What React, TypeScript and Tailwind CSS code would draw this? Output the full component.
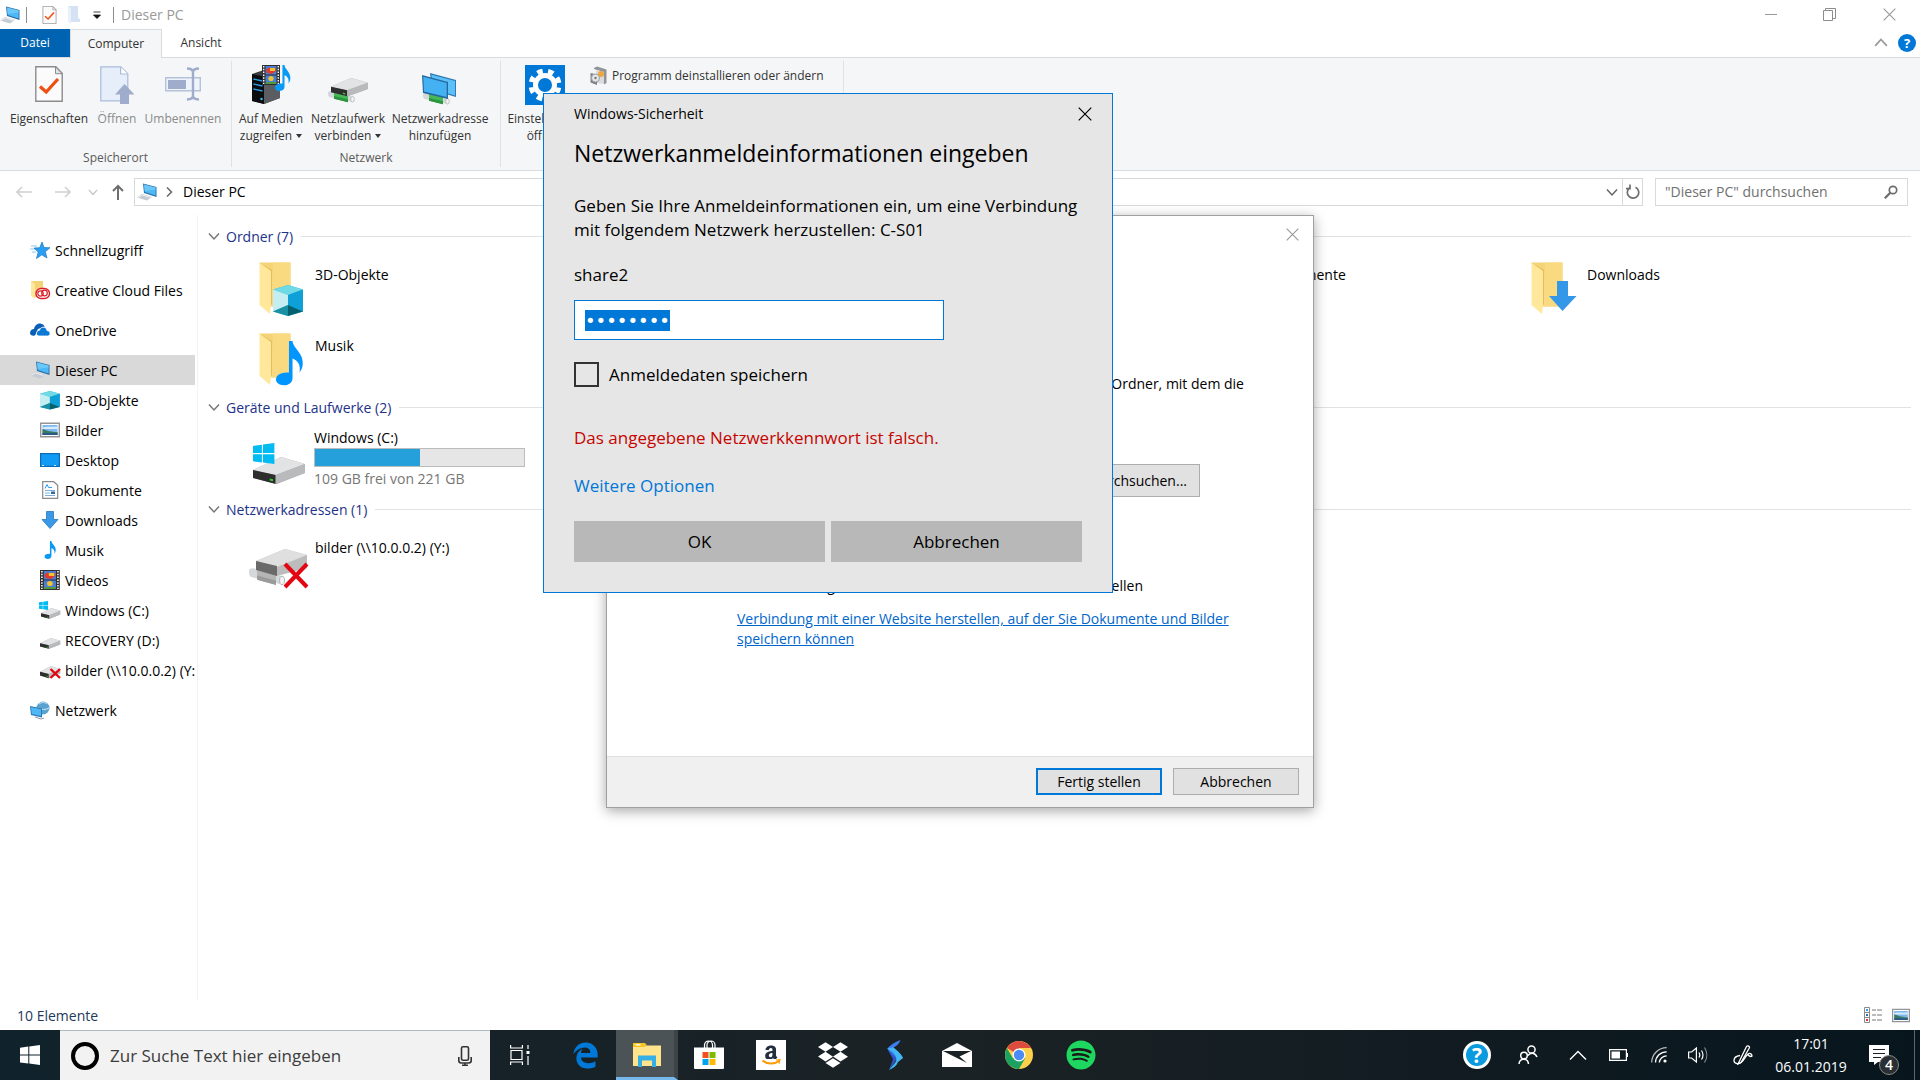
import { useEffect, useRef, type ReactNode } from "react"
import { FaAmazon, FaDropbox, FaEdgeLegacy, FaSpotify } from "react-icons/fa"

/* ---------- Icons ---------- */

interface IconProps {
  className?: string
}

function PcIcon({ className = "" }: IconProps) {
  return (
    <svg viewBox="0 0 20 18" className={`h-[18px] w-5 shrink-0 ${className}`} aria-hidden="true">
      <path d="M0 14.5 5 11l10 3-5 3.5z" fill="#c4cbd4" />
      <path d="M1 14.6 5.4 12l8 2.4" stroke="#eef1f4" fill="none" />
      <path d="M6 .5 19.5 4v10L7 10z" fill="#2a6ea6" />
      <path d="M7 1.6 18.6 4.6v8L7.8 9z" fill="#4db8f5" />
      <path d="M7 1.6 18.6 4.6v2L7.5 8z" fill="#7fd0fb" opacity=".6" />
    </svg>
  )
}

function SheetCheckIcon({ className = "" }: IconProps) {
  return (
    <svg viewBox="0 0 28 36" className={className} aria-hidden="true">
      <path d="M.8.8h20l6.4 6.6v27.8H.8z" fill="#fbfbfb" stroke="#8c8c8c" strokeWidth="1.4" />
      <path d="M20.5 1v6.7h6.7z" fill="#e4e4e4" stroke="#8c8c8c" strokeWidth="1" />
      <path d="M5 20.5 11.2 26 23 13" fill="none" stroke="#f04e12" strokeWidth="3.2" />
    </svg>
  )
}

function OpenIcon() {
  return (
    <svg viewBox="0 0 35 38" className="h-[38px] w-[35px]" aria-hidden="true">
      <path d="M.8.8h20l7 7v27H.8z" fill="#e6eefa" stroke="#a9bbdb" strokeWidth="1.2" />
      <path d="M20.6 1v7h7" fill="#fff" stroke="#a9bbdb" strokeWidth="1.2" />
      <path d="M24.5 18 34.5 28.5H29V38h-9v-9.5h-5z" fill="#9faccb" />
    </svg>
  )
}

function RenameIcon() {
  return (
    <svg viewBox="0 0 36 34" className="h-[34px] w-9" aria-hidden="true">
      <path d="M.7 10.7h34.6v13H.7z" fill="#eff4fb" stroke="#b4c2da" strokeWidth="1.4" />
      <path d="M3 13h18v9H3z" fill="#9faccb" />
      <path d="M22 1.5c4 0 6 1 6 4v23c0 3-2 4-6 4M34 1.5c-4 0-6 1-6 4v23c0 3 2 4 6 4" fill="none" stroke="#9faccb" strokeWidth="2.4" />
    </svg>
  )
}

function FilmStrip() {
  return (
    <>
      <path d="M0 0h18v20H0z" fill="#2f2f2f" />
      <path d="M3.5 1h11v8.5h-11z" fill="#4a7fd6" />
      <path d="M3.5 10.5h11V19h-11z" fill="#4a7fd6" />
      <path d="M4 5l3-3 2 3 4-3 1 4-4 3-5-1z" fill="#e33a2c" />
      <path d="M8 3h5v3H8z" fill="#f1c232" />
      <circle cx="9" cy="13.5" r="2.6" fill="#f1c232" />
      <path d="M4 17h10v2H4z" fill="#4f9a3b" />
      <path d="M1.7 1v18M16.3 1v18" stroke="#fff" strokeWidth="1.4" strokeDasharray="1.5 1.3" />
    </>
  )
}

function NotePath({ fill = "#0a99f5" }: { fill?: string }) {
  return (
    <path
      d="M8 0h2.200c.4 5 7 7.500 6.300 15-.2 2-1 3.500-2 5 .8-4.500-.5-7.500-4.300-9v12.500c0 3-2.600 4.500-5.400 4.500C2 28 0 26.500 0 24.400 0 21.600 3 19.600 8 20z"
      fill={fill}
    />
  )
}

function MediaServerIcon() {
  return (
    <svg viewBox="0 0 40 40" className="size-10" aria-hidden="true">
      <path d="M1 9l12-4 16 3v25l-16 6L1 36z" fill="#3a3d40" />
      <path d="M1 9l12 2.5V39L1 36z" fill="#0c0d0f" />
      <path d="M13 11.5 29 8v25l-16 6z" fill="#5a5e62" />
      <path d="M2.500 14l9 2M2.500 19l9 2M2.500 24l9 2" stroke="#2aa3ef" strokeWidth="1.3" />
      <circle cx="10.5" cy="34" r="1.2" fill="#37c4ff" />
      <g transform="translate(11 0)">
        <FilmStrip />
      </g>
      <g transform="translate(24 0) scale(.93)">
        <NotePath />
      </g>
    </svg>
  )
}

function DriveShape() {
  return (
    <>
      <path d="M0 13 26 0l22 7v9L22 27 0 21z" fill="#a8a8a8" />
      <path d="M0 13 26 0l22 7L21 18z" fill="#e2e3e5" />
      <path d="M0 13l21 5v9L0 21z" fill="#2e2e2e" />
      <path d="M21 18 48 7v9L21 27z" fill="#b9babb" />
      <path d="M15.5 21.5l3 .8v2l-3-.8z" fill="#33d12b" />
    </>
  )
}

function PipeShape({ body = "#46b957", dark = "#2d9440" }: { body?: string; dark?: string }) {
  return (
    <>
      <path d="M0 1.5C0 .5 2 0 3 .2l22 5.300c1.500.4 2 5-.5 5.500L1.500 6C0 5.500 0 3 0 1.500z" fill="#d4d8da" />
      <path d="M6 0l14 3.200v8L6 7.800z" fill={body} />
      <path d="M6 5l14 3.300v3L6 7.800z" fill={dark} />
      <ellipse cx="24.5" cy="8.3" rx="1.8" ry="2.8" fill="#f4f4f4" stroke="#a3a8aa" strokeWidth=".6" />
    </>
  )
}

function NetDriveIcon() {
  return (
    <svg viewBox="0 0 40 28" className="h-7 w-10" aria-hidden="true">
      <g transform="translate(0 14)">
        <PipeShape />
      </g>
      <g transform="translate(3 1) scale(.77 .68)">
        <DriveShape />
      </g>
    </svg>
  )
}

function NetPlaceIcon() {
  return (
    <svg viewBox="0 0 36 32" className="h-8 w-9" aria-hidden="true">
      <path d="M8 0l26 7v17L10 17z" fill="#2f79b5" />
      <path d="M9.500 1.700 33 8v14.500L11 16z" fill="#5cc0f8" />
      <g transform="translate(1 20)">
        <PipeShape />
      </g>
      <path d="M0 2l26 7v17L1 20z" fill="#24689f" />
      <path d="M1.300 3.700 24.700 10v14L2 18.500z" fill="#44b1f3" />
    </svg>
  )
}

function GearIcon() {
  return (
    <svg viewBox="0 0 40 40" className="size-10" aria-hidden="true">
      <path d="M0 0h40v40H0z" fill="#0078d7" />
      <circle cx="20" cy="20" r="9.5" fill="none" stroke="#fff" strokeWidth="5" />
      <circle cx="20" cy="20" r="14" fill="none" stroke="#fff" strokeWidth="5" strokeDasharray="5.5 5.496" strokeDashoffset="-2.7" />
    </svg>
  )
}

function UninstallIcon() {
  return (
    <svg viewBox="0 0 17 20" className="h-5 w-[17px]" aria-hidden="true">
      <path d="M4 2l3-1.500 9.500 3V17L14 18.500V6L4 3z" fill="#8f9498" />
      <path d="M6 4l8 2.500V18l-8-1z" fill="#d9dbdc" />
      <circle cx="11" cy="8" r="3" fill="#f0a63a" />
      <path d="M.5 7 7 8.500V19L.5 16.500z" fill="#7d8184" />
      <circle cx="5.5" cy="12" r="4" fill="#e5e8ea" stroke="#9b9fa2" />
      <circle cx="5.5" cy="12" r="1.2" fill="#777" />
    </svg>
  )
}

function CubeShape() {
  return (
    <>
      <path d="M0 4.500 15 0l15 4.500v22L15 31 0 26.500z" fill="#22b8d0" />
      <path d="M0 4.500 15 0l15 4.500L15 10z" fill="#6fd9e6" />
      <path d="M0 4.500 15 10v10L0 26.500z" fill="#c5eef3" />
      <path d="M15 10 30 4.500v22L15 20z" fill="#0fa0d8" />
      <path d="M0 26.500 15 20v11z" fill="#1b8fa3" />
      <path d="M15 20l15 6.500L15 31z" fill="#05616f" />
    </>
  )
}

function PictureShape() {
  return (
    <>
      <path d="M.7.700h18.600v13.600H.7z" fill="#fff" stroke="#949494" strokeWidth="1.4" />
      <path d="M2.500 2.500h15v10h-15z" fill="#7db8ee" />
      <path d="M2.500 5c5-1.500 9 0 15-1v2.500h-15z" fill="#d7ebfa" />
      <path d="M2.500 6.500c3 .5 6 3 15 3v3h-15z" fill="#3e7a63" />
      <path d="M2.500 10.500c5-1 10 .5 15 0v2h-15z" fill="#2a5a86" />
    </>
  )
}

type FolderKind = "cube" | "music" | "download" | "picture" | "desktop" | "document" | "video"

function FolderIcon({ kind }: { kind: FolderKind }) {
  return (
    <svg viewBox="0 0 48 54" className="h-[54px] w-12" aria-hidden="true">
      <path d="M.5.500h31V44.500h-20z" fill="#f5d478" />
      <path d="M14 .500h17.500V44.500H12z" fill="#f9da80" />
      <path d="M.5.500 12 9v34l-1 9L.5 43z" fill="#ffe79c" />
      <path d="M.5.500 12 9v34l1-1V8z" fill="#e5bd5c" />
      {kind === "cube" && (
        <g transform="translate(14 23)">
          <CubeShape />
        </g>
      )}
      {kind === "music" && (
        <g transform="translate(17 8) scale(1.62 1.58)">
          <NotePath fill="#0095ff" />
        </g>
      )}
      {kind === "download" && <path d="M26 19h11v15h8.500L31.500 49 18 34h8z" fill="#3497e8" />}
      {kind === "picture" && (
        <g transform="translate(18 30) scale(1.4)">
          <PictureShape />
        </g>
      )}
      {kind === "desktop" && <path d="M18 30h28v19H18z" fill="#129bf5" stroke="#0b6db8" />}
      {kind === "document" && <path d="M22 22h22v28H22z" fill="#fff" stroke="#8a8a8a" />}
      {kind === "video" && (
        <g transform="translate(22 24) scale(1.3)">
          <FilmStrip />
        </g>
      )}
    </svg>
  )
}

function WinLogo({ fill = "#fff" }: { fill?: string }) {
  return <path d="M0 2.800 8.300 1.600v8H0zM9.300 1.500 20 0v9.600H9.300zM0 10.600h8.300v8L0 17.400zM9.300 10.600H20V20L9.300 18.600z" fill={fill} />
}

function WindowsDriveIcon() {
  return (
    <svg viewBox="0 0 54 42" className="h-[42px] w-[54px]" aria-hidden="true">
      <g transform="translate(1 14) scale(1.08 1)">
        <DriveShape />
      </g>
      <g transform="translate(1 0) scale(1.07 1.05)">
        <WinLogo fill="#00bcf2" />
      </g>
    </svg>
  )
}

function BrokenDriveIcon() {
  return (
    <svg viewBox="0 0 60 40" className="h-10 w-[60px]" aria-hidden="true">
      <g transform="translate(0 19) scale(1.35 1.5)">
        <PipeShape body="#b5b5b5" dark="#9b9b9b" />
      </g>
      <g transform="translate(7 0)">
        <path d="M0 12 29 0l22 6v13L21 27 0 21z" fill="#bcbcbc" />
        <path d="M0 12 29 0l22 6-30 12z" fill="#dfdfdf" />
        <path d="M0 12l21 5v10L0 21z" fill="#6a6a6a" />
      </g>
      <path d="M36 15 58 38M58 15 36 38" stroke="#e30613" strokeWidth="4" />
    </svg>
  )
}

function Chevron({ dir, className = "" }: { dir: "up" | "down" | "right"; className?: string }) {
  const d = { up: "M1 8.500 6 3l5 5.500", down: "M1 3.500 6 9l5-5.500", right: "M4 1.500 8.500 6 4 10.500" }[dir]
  return (
    <svg viewBox="0 0 12 12" className={`shrink-0 ${className}`} fill="none" stroke="currentColor" aria-hidden="true">
      <path d={d} strokeWidth="1.5" />
    </svg>
  )
}

function CloseIcon({ className = "" }: IconProps) {
  return (
    <svg viewBox="0 0 14 14" className={className} stroke="currentColor" aria-hidden="true">
      <path d="M.7.700l12.600 12.600M13.300.700.7 13.300" strokeWidth="1.2" />
    </svg>
  )
}

/* ---------- Sidebar ---------- */

const smallIcons: Record<string, ReactNode> = {
  star: (
    <>
      <path d="M1 5h6M0 8h5M2 11h4" stroke="#8ec9ef" />
      <path d="M12 1l2 5.500 6 .2-4.700 4L17 17l-5.200-3.200L6.500 17.500 8.200 11 4 7l5.700-.3z" fill="#2a9df4" stroke="#1c77bd" strokeWidth=".7" />
    </>
  ),
  creative: (
    <>
      <path d="M1 0h12v16H5z" fill="#f4d377" />
      <path d="M1 0l4 3v15l-4-3z" fill="#ffe79c" />
      <rect x="6" y="7.5" width="13.5" height="10" rx="5" fill="#fff" stroke="#da1f26" strokeWidth="1.4" />
      <circle cx="10.5" cy="12.5" r="2.7" fill="none" stroke="#da1f26" strokeWidth="1.2" />
      <circle cx="14.5" cy="12" r="2.8" fill="none" stroke="#da1f26" strokeWidth="1.2" />
    </>
  ),
  cloud: (
    <>
      <path d="M0 12c0-2.500 2-4 4-4 .5-3.500 3.500-6 6.500-5.500 2 .3 3.500 1.500 4.200 3.200L8 8l-3 6.500C2 15 0 14 0 12z" fill="#0a5fb5" />
      <path d="M6.500 12.500c0-2 1.500-3.200 3-3.300.7-2.500 3-3.500 4.700-2.900 1.700.4 2.600 1.800 2.700 3.200 2 .1 3.100 1.500 3.100 3 0 1.600-1.200 2.500-2.500 2.500H9c-1.500 0-2.500-1-2.500-2.500z" fill="#0a78d4" stroke="#fff" strokeWidth=".8" />
    </>
  ),
  cube: (
    <g transform="scale(.66 .6)">
      <CubeShape />
    </g>
  ),
  picture: (
    <g transform="translate(0 1.5)">
      <PictureShape />
    </g>
  ),
  desktop: (
    <>
      <path d="M.6 2.600h18.800v12.800H.6z" fill="#129bf5" stroke="#0b6db8" strokeWidth="1.2" />
      <path d="M2 14.500h16" stroke="#cfe9fb" strokeDasharray="2 10" />
    </>
  ),
  document: (
    <>
      <path d="M2.700.700h11l4 3.500v13.100h-15z" fill="#fff" stroke="#8a8a8a" strokeWidth="1.2" />
      <path d="M5 7.500l2-4 1.500 3H12" stroke="#2a9df4" fill="none" />
      <path d="M5 9.500h10M5 12h5M5 14.500h10" stroke="#7faed6" />
      <path d="M11 10.500h4V13h-4z" fill="#2a6ea6" />
    </>
  ),
  download: <path d="M6.500.500h7v8H18L10 17.500 2 8.500h4.500z" fill="#3a98e6" stroke="#2477bd" strokeWidth=".8" />,
  music: (
    <g transform="translate(4.5 0) scale(.68 .64)">
      <NotePath />
    </g>
  ),
  video: (
    <g transform="translate(0 -1) scale(1.1 1)">
      <FilmStrip />
    </g>
  ),
  windrive: (
    <>
      <g transform="translate(1 7) scale(.4 .4)">
        <DriveShape />
      </g>
      <g transform="translate(-1 0) scale(.45 .45)">
        <WinLogo fill="#00bcf2" />
      </g>
    </>
  ),
  drive: (
    <g transform="translate(0 7) scale(.42 .4)">
      <DriveShape />
    </g>
  ),
  broken: (
    <>
      <g transform="translate(0 5) scale(.42 .45)">
        <DriveShape />
      </g>
      <path d="M10.500 8 20 17M20 8l-9.500 9" stroke="#e30613" strokeWidth="2.4" />
    </>
  ),
  network: (
    <>
      <circle cx="13" cy="7" r="6.5" fill="#5aa3cf" />
      <path d="M9 3c3-2 6-2 8 0M8 7c3 2 8 2 11 0" stroke="#cfe8f6" fill="none" />
      <path d="M0 5l12 2.500v9L1 14z" fill="#2a78b4" />
      <path d="M1 6.300l10 2v6.800L1.800 13z" fill="#4db8f5" />
      <path d="M5 16l6 2 3-1" stroke="#8c99a5" fill="none" />
    </>
  ),
}

function SmallIcon({ name }: { name: string }) {
  if (name === "pc") return <PcIcon />
  return (
    <svg viewBox="0 0 20 18" className="h-[18px] w-5 shrink-0 overflow-visible" aria-hidden="true">
      {smallIcons[name]}
    </svg>
  )
}

interface NavItem {
  label: string
  icon: string
  nested?: boolean
  active?: boolean
}

const navGroups: NavItem[][] = [
  [{ label: "Schnellzugriff", icon: "star" }],
  [{ label: "Creative Cloud Files", icon: "creative" }],
  [{ label: "OneDrive", icon: "cloud" }],
  [
    { label: "Dieser PC", icon: "pc", active: true },
    { label: "3D-Objekte", icon: "cube", nested: true },
    { label: "Bilder", icon: "picture", nested: true },
    { label: "Desktop", icon: "desktop", nested: true },
    { label: "Dokumente", icon: "document", nested: true },
    { label: "Downloads", icon: "download", nested: true },
    { label: "Musik", icon: "music", nested: true },
    { label: "Videos", icon: "video", nested: true },
    { label: "Windows (C:)", icon: "windrive", nested: true },
    { label: "RECOVERY (D:)", icon: "drive", nested: true },
    { label: "bilder (\\\\10.0.0.2) (Y:)", icon: "broken", nested: true },
  ],
  [{ label: "Netzwerk", icon: "network" }],
]

function Sidebar() {
  return (
    <nav className="flex w-[198px] shrink-0 flex-col gap-2.5 border-r border-[#f3f3f3] pt-5 pr-0.5">
      {navGroups.map((group, i) => (
        <ul key={i}>
          {group.map((item) => (
            <li key={item.label}>
              <a
                href="#"
                className={`flex h-[30px] items-center gap-[5px] overflow-hidden whitespace-nowrap ${item.nested ? "pl-10" : "pl-[30px]"} ${item.active ? "bg-[#d9d9d9]" : ""}`}
              >
                <SmallIcon name={item.icon} />
                {item.label}
              </a>
            </li>
          ))}
        </ul>
      ))}
    </nav>
  )
}

/* ---------- Title bar, ribbon, address bar ---------- */

function TitleBar() {
  return (
    <header className="flex h-[29px] shrink-0 items-center text-[#999]">
      <PcIcon />
      <span className="ml-1.5 h-4 w-px bg-[#8c8c8c]" />
      <button aria-label="Eigenschaften" className="ml-[15px]">
        <SheetCheckIcon className="h-[18px] w-[15px]" />
      </button>
      <button aria-label="Neuer Ordner" className="ml-[11px]">
        <svg viewBox="0 0 12 18" className="h-[18px] w-3" aria-hidden="true">
          <path d="M0 0h10v12l2 1v3H3z" fill="#d5e2f4" />
          <path d="M0 0l3 2v16l-3-2z" fill="#e8f0fa" />
        </svg>
      </button>
      <button aria-label="Symbolleiste anpassen" className="ml-[13px]">
        <svg viewBox="0 0 8 8" className="size-2" aria-hidden="true">
          <path d="M.5 1h7M.5 4h7L4 7.500z" fill="#111" stroke="#111" strokeWidth=".8" />
        </svg>
      </button>
      <span className="ml-3 h-4 w-px bg-[#8c8c8c]" />
      <h1 className="ml-[7px] flex-1">Dieser PC</h1>
      <button aria-label="Minimieren" className="flex w-[58px] justify-center">
        <span className="h-px w-3 bg-[#999]" />
      </button>
      <button aria-label="Verkleinern" className="flex w-[58px] justify-center">
        <svg viewBox="0 0 13 13" className="size-[13px]" fill="none" stroke="#8c8c8c" aria-hidden="true">
          <path d="M.5 2.500h9v10h-9zM2.500 2.500v-2h10v10h-3" />
        </svg>
      </button>
      <button aria-label="Schließen" className="flex w-[62px] justify-center">
        <CloseIcon className="size-[13px]" />
      </button>
    </header>
  )
}

interface RibbonButtonProps {
  icon: ReactNode
  lines: string[]
  width: string
  menu?: boolean
  disabled?: boolean
}

function RibbonButton({ icon, lines, width, menu, disabled }: RibbonButtonProps) {
  return (
    <button disabled={disabled} className={`flex flex-col items-center whitespace-nowrap ${width} ${disabled ? "text-[#8b8b8b]" : ""}`}>
      <span className="flex h-[46px] items-start pt-px">{icon}</span>
      {lines.map((line, i) => (
        <span key={line} className="flex items-center gap-1 leading-[17px]">
          {line}
          {menu && i === lines.length - 1 && (
            <span className="border-x-3 border-t-4 border-x-transparent border-t-[#333]" />
          )}
        </span>
      ))}
    </button>
  )
}

function RibbonGroup({ label, className = "", children }: { label: string; className?: string; children: ReactNode }) {
  return (
    <section className={`my-[3px] flex flex-col border-r border-[#e0e1e2] ${className}`}>
      <div className="flex flex-1 items-start">{children}</div>
      <h2 className="text-center leading-[18px] text-[#5a5a5a]">{label}</h2>
    </section>
  )
}

function Ribbon() {
  return (
    <div className="shrink-0 text-[12px] text-[#333]">
      <div className="flex h-7 items-stretch">
        <button className="w-[70px] bg-[#0063b1] text-white">Datei</button>
        <button className="z-10 -mb-px w-[92px] border border-b-0 border-[#dadbdc] bg-[#f5f6f7]">Computer</button>
        <button className="w-[78px]">Ansicht</button>
        <span className="flex-1" />
        <button aria-label="Menüband minimieren" className="text-[#999]">
          <Chevron dir="up" className="size-3.5" />
        </button>
        <button aria-label="Hilfe" className="mr-1 ml-2.5 size-[18px] self-center rounded-full bg-[#0078d7] text-[13px] leading-[18px] font-bold text-white">
          ?
        </button>
      </div>
      <div className="flex h-[114px] border-y border-[#dadbdc] bg-[#f5f6f7]">
        <RibbonGroup label="Speicherort" className="w-[232px] px-[7px] pt-[3px]">
          <RibbonButton width="w-[84px]" icon={<span className="pt-px"><SheetCheckIcon className="h-9 w-7" /></span>} lines={["Eigenschaften"]} />
          <RibbonButton width="w-[52px]" icon={<span className="pt-px"><OpenIcon /></span>} lines={["Öffnen"]} disabled />
          <RibbonButton width="w-20" icon={<span className="pt-0.5"><RenameIcon /></span>} lines={["Umbenennen"]} disabled />
        </RibbonGroup>
        <RibbonGroup label="Netzwerk" className="w-[269px] px-1 pt-[3px]">
          <RibbonButton width="w-[70px]" icon={<MediaServerIcon />} lines={["Auf Medien", "zugreifen"]} menu />
          <RibbonButton width="w-[84px]" icon={<span className="pt-3"><NetDriveIcon /></span>} lines={["Netzlaufwerk", "verbinden"]} menu />
          <RibbonButton width="w-[100px]" icon={<span className="pt-2"><NetPlaceIcon /></span>} lines={["Netzwerkadresse", "hinzufügen"]} />
        </RibbonGroup>
        <RibbonGroup label="System" className="w-[343px] px-1 pt-[3px]">
          <RibbonButton width="w-20" icon={<GearIcon />} lines={["Einstellungen", "öffnen"]} />
          <button className="mt-0.5 ml-[5px] flex items-center gap-[5px] whitespace-nowrap">
            <UninstallIcon />
            Programm deinstallieren oder ändern
          </button>
        </RibbonGroup>
      </div>
    </div>
  )
}

function AddressBar() {
  return (
    <div className="flex h-11 shrink-0 items-center pt-[7px] pb-2.5">
      <button aria-label="Zurück" className="ml-4 text-[#d0d0d0]">
        <svg viewBox="0 0 16 12" className="h-3 w-4" fill="none" stroke="currentColor" strokeWidth="1.6" aria-hidden="true">
          <path d="M16 6H1M6 1 1 6l5 5" />
        </svg>
      </button>
      <button aria-label="Vorwärts" className="ml-[23px] text-[#d0d0d0]">
        <svg viewBox="0 0 16 12" className="h-3 w-4" fill="none" stroke="currentColor" strokeWidth="1.6" aria-hidden="true">
          <path d="M0 6h15M10 1l5 5-5 5" />
        </svg>
      </button>
      <button aria-label="Verlauf" className="ml-[17px] text-[#c4c4c4]">
        <Chevron dir="down" className="size-2.5" />
      </button>
      <button aria-label="Nach oben" className="ml-3.5 text-[#6e6e6e]">
        <svg viewBox="0 0 12 16" className="h-4 w-3" fill="none" stroke="currentColor" strokeWidth="2" aria-hidden="true">
          <path d="M6 16V2M1 7l5-5 5 5" />
        </svg>
      </button>
      <div className="ml-2.5 flex h-7 flex-1 items-center border border-[#d9d9d9] pl-0.5">
        <PcIcon />
        <Chevron dir="right" className="ml-1.5 size-3 text-[#666]" />
        <span className="ml-2 flex-1">Dieser PC</span>
        <button aria-label="Vorherige Orte" className="mr-1 text-[#666]">
          <Chevron dir="down" className="size-3" />
        </button>
        <button aria-label="Aktualisieren" className="flex w-5 items-center justify-center self-stretch border-l border-[#d9d9d9]">
          <svg viewBox="0 0 14 16" className="h-4 w-3.5" fill="none" stroke="#6e6e6e" strokeWidth="1.7" aria-hidden="true">
            <path d="M9.500 3.300A5.700 5.700 0 1 1 3.700 3.800M4 .5v4.200H0" />
          </svg>
        </button>
      </div>
      <label className="mr-3 ml-3 flex h-7 w-[253px] items-center border border-[#d9d9d9] px-[9px]">
        <input
          type="search"
          aria-label="Dieser PC durchsuchen"
          placeholder={'"Dieser PC" durchsuchen'}
          className="min-w-0 flex-1 outline-none placeholder:text-[#707070]"
        />
        <svg viewBox="0 0 14 14" className="size-3.5" fill="none" stroke="#6b6b6b" aria-hidden="true">
          <circle cx="9" cy="5" r="3.7" strokeWidth="1.7" />
          <path d="M6.500 7.500.8 13.200" strokeWidth="2.2" />
        </svg>
      </label>
    </div>
  )
}

/* ---------- File area ---------- */

function Section({ title, className = "", children }: { title: string; className?: string; children: ReactNode }) {
  return (
    <section className={className}>
      <h2 className="flex h-6 items-center text-[#1e3287]">
        <Chevron dir="down" className="mr-1.5 size-3 text-[#777]" />
        {title}
        <span className="ml-2 h-px flex-1 bg-[#e2e2e2]" />
      </h2>
      <div className="grid grid-cols-[repeat(auto-fill,318px)] pl-10">{children}</div>
    </section>
  )
}

const folders: { label: string; kind: FolderKind }[] = [
  { label: "3D-Objekte", kind: "cube" },
  { label: "Bilder", kind: "picture" },
  { label: "Desktop", kind: "desktop" },
  { label: "Dokumente", kind: "document" },
  { label: "Downloads", kind: "download" },
  { label: "Musik", kind: "music" },
  { label: "Videos", kind: "video" },
]

function FileArea() {
  return (
    <main className="flex-1 pt-[9px] pr-[9px] pl-2.5">
      <Section title="Ordner (7)">
        {folders.map((f) => (
          <a key={f.label} href="#" className="flex h-[71px] items-start gap-2 pt-3.5 pl-[11px]">
            <FolderIcon kind={f.kind} />
            <span className="leading-[26px]">{f.label}</span>
          </a>
        ))}
      </Section>
      <Section title="Geräte und Laufwerke (2)" className="mt-[5px]">
        <a href="#" className="flex h-[78px] items-start gap-2 pt-2 pl-1">
          <span className="pt-4">
            <WindowsDriveIcon />
          </span>
          <span className="flex w-[211px] flex-col">
            <span className="leading-[21px]">Windows (C:)</span>
            <span className="h-[19px] border border-[#bcbcbc] bg-[#e6e6e6]">
              <span className="block h-full w-1/2 bg-[#26a0da]" />
            </span>
            <span className="leading-[24px] text-[#767676]">109 GB frei von 221 GB</span>
          </span>
        </a>
      </Section>
      <Section title="Netzwerkadressen (1)">
        <a href="#" className="flex items-start gap-1.5 pt-3.5 pl-px whitespace-nowrap">
          <span className="pt-3.5">
            <BrokenDriveIcon />
          </span>
          <span className="leading-[26px]">{"bilder (\\\\10.0.0.2) (Y:)"}</span>
        </a>
      </Section>
    </main>
  )
}

function StatusBar() {
  return (
    <footer className="flex h-[30px] shrink-0 items-center pr-2.5 pl-[17px] text-[#1e395b]">
      <span className="flex-1">10 Elemente</span>
      <button aria-label="Details">
        <svg viewBox="0 0 18 16" className="h-4 w-[18px]" fill="none" aria-hidden="true">
          <path d="M.5.500h5v15h-5zM.5 5.500h5M.5 10.500h5" stroke="#8a8a8a" />
          <path d="M8 3h4m1 0h5M8 8h4m1 0h5M8 13h4m1 0h5" stroke="#777" />
          <path d="M2 2h2v2H2z" fill="#2a9df4" />
          <path d="M2 7h2v2H2z" fill="#2a6ea6" />
          <path d="M2 12h2v2H2z" fill="#d33" />
        </svg>
      </button>
      <button aria-label="Große Symbole" className="ml-2.5">
        <svg viewBox="0 0 20 15" className="h-[15px] w-[18px]" aria-hidden="true">
          <PictureShape />
        </svg>
      </button>
    </footer>
  )
}

/* ---------- Dialogs ---------- */

function MapDriveDialog() {
  return (
    <div
      role="dialog"
      aria-label="Netzlaufwerk verbinden"
      className="absolute top-[215px] left-[606px] flex h-[593px] w-[708px] flex-col border border-[#a0a0a0] bg-white shadow-[0_3px_12px_rgba(0,0,0,0.35)]"
    >
      <button aria-label="Schließen" className="mt-3 mr-3.5 self-end text-[#999]">
        <CloseIcon className="size-[13px]" />
      </button>
      <div className="flex flex-1 flex-col pr-[69px] pl-[130px]">
        <p className="mt-[133px] text-right leading-5 whitespace-nowrap">für die Verbindung und den Ordner, mit dem die</p>
        <button className="mt-[70px] mr-11 h-[33px] self-end border border-[#adadad] bg-[#e1e1e1] px-3">Durchsuchen...</button>
        <label className="mt-[79px] mr-[101px] flex items-center gap-2 self-end leading-5 whitespace-nowrap">
          <input type="checkbox" className="size-[13px]" />
          Verbindung mit anderen Anmeldeinformationen herstellen
        </label>
        <a href="#" className="mt-[13px] w-[510px] leading-5 text-[#0066cc] underline">
          Verbindung mit einer Website herstellen, auf der Sie Dokumente und Bilder speichern können
        </a>
      </div>
      <div className="flex h-[51px] items-start justify-end gap-[11px] border-t border-[#dfdfdf] bg-[#f0f0f0] pt-[11px] pr-3.5">
        <button className="h-[27px] w-[126px] border-2 border-[#0078d7] bg-[#e1e1e1] leading-5">Fertig stellen</button>
        <button className="h-[27px] w-[126px] border border-[#adadad] bg-[#e1e1e1] leading-5">Abbrechen</button>
      </div>
    </div>
  )
}

function CredentialDialog() {
  const passwordRef = useRef<HTMLInputElement>(null)

  useEffect(() => {
    passwordRef.current?.focus()
    passwordRef.current?.select()
  }, [])

  return (
    <form
      role="dialog"
      aria-label="Windows-Sicherheit"
      className="absolute top-[93px] left-[543px] flex w-[570px] flex-col border border-[#0078d7] bg-[#e6e6e6] px-[30px] pb-[30px] text-[17px] leading-6 text-black"
    >
      <div className="flex h-10 items-center justify-between text-[14px]">
        <span>Windows-Sicherheit</span>
        <button type="button" aria-label="Schließen" className="-mr-2.5">
          <CloseIcon className="size-3.5" />
        </button>
      </div>
      <h2 className="text-[23px] leading-[38px] whitespace-nowrap">Netzwerkanmeldeinformationen eingeben</h2>
      <p className="mt-[22px] whitespace-nowrap">
        Geben Sie Ihre Anmeldeinformationen ein, um eine Verbindung
        <br />
        mit folgendem Netzwerk herzustellen: C-S01
      </p>
      <label htmlFor="password" className="mt-[21px]">
        share2
      </label>
      <input
        id="password"
        ref={passwordRef}
        type="password"
        defaultValue="password"
        className="mt-[13px] h-10 w-[370px] border border-[#0078d7] bg-white px-2.5 font-['DejaVu_Sans',sans-serif] text-[18px] outline-none selection:bg-[#0078d7] selection:text-white"
      />
      <label className="mt-[22px] flex items-center gap-2.5">
        <input type="checkbox" className="size-[25px] appearance-none border-2 border-[#333]" />
        Anmeldedaten speichern
      </label>
      <p className="mt-[39px] text-[#c50500]">Das angegebene Netzwerkkennwort ist falsch.</p>
      <a href="#" className="mt-6 self-start text-[#0078d7]">
        Weitere Optionen
      </a>
      <div className="mt-[23px] flex gap-1.5">
        <button type="button" className="h-[41px] flex-1 bg-[#b8b8b8]">
          OK
        </button>
        <button type="button" className="h-[41px] flex-1 bg-[#b8b8b8]">
          Abbrechen
        </button>
      </div>
    </form>
  )
}

/* ---------- Taskbar ---------- */

function ExplorerIcon() {
  return (
    <svg viewBox="0 0 28 24" className="h-6 w-7" aria-hidden="true">
      <path d="M0 0h12l2 2.500H0z" fill="#fcc51e" />
      <path d="M0 2.500h28V23H0z" fill="#ffe48b" />
      <path d="M0 1h12v3H0z" fill="#fcc51e" />
      <path d="M2.500 1.200h5v1.300h-5z" fill="#fff" />
      <path d="M5 12.500h18V24h-4v-6.500H9V24H5z" fill="#35b0e6" />
    </svg>
  )
}

function StoreIcon() {
  return (
    <svg viewBox="0 0 30 30" className="size-[30px]" aria-hidden="true">
      <path d="M10.500 8V5a4 4 0 0 1 8 0v3M13 8V5a4 4 0 0 1 8 0v3" fill="none" stroke="#fff" strokeWidth="1.2" />
      <path d="M0 7.500h30V28a1 1 0 0 1-1 1H1a1 1 0 0 1-1-1z" fill="#fff" />
      <path d="M8.500 12h6v6h-6z" fill="#f25022" />
      <path d="M15.500 12h6v6h-6z" fill="#7fba00" />
      <path d="M8.500 19h6v6h-6z" fill="#00a4ef" />
      <path d="M15.500 19h6v6h-6z" fill="#ffb900" />
    </svg>
  )
}

function AmazonIcon() {
  return (
    <span className="relative flex size-[30px] items-center justify-center bg-white">
      <FaAmazon className="size-[22px] text-[#232f3e]" />
      <svg viewBox="0 0 30 30" className="absolute inset-0 size-[30px]" aria-hidden="true">
        <path d="M4 19h22v9H4z" fill="#fff" />
        <path d="M6.500 20.500c5 4 12 4 16.500.5" fill="none" stroke="#f90" strokeWidth="2" />
        <path d="M20 20l4-.3-1 4" fill="none" stroke="#f90" strokeWidth="1.2" />
      </svg>
    </span>
  )
}

function SBoltIcon() {
  return (
    <svg viewBox="0 0 16 30" className="h-[30px] w-4" aria-hidden="true">
      <path d="M13.500 0C9 1.500 3 5 .5 8.500c3 5 4.500 8 7 12L16 18C13 13 9 10 6.500 7.500 9.500 6 12 4 13.500 0z" fill="#3d7df0" />
      <path d="M0 8.500C5 11 9 14 9.500 19c0 4-5 7-7.500 11 5-2 8-5 9-8l5-4C14 13 9 10 6.500 7.500z" fill="#41b8f2" />
      <path d="M0 8.500l9.300 9.500c-1 5-5 8-7.300 12 2-6 4-9 4-11z" fill="#2f55c8" />
    </svg>
  )
}

function MailIcon() {
  return (
    <svg viewBox="0 0 30 24" className="h-6 w-[30px]" aria-hidden="true">
      <path d="M0 8 15 0l15 8v16H0z" fill="#fff" />
      <path d="M1 8h28L17.500 13.500 25 20z" fill="#1a2226" />
    </svg>
  )
}

function ChromeIcon() {
  return (
    <svg viewBox="0 0 28 28" className="size-7" aria-hidden="true">
      <circle cx="14" cy="14" r="14" fill="#fdd04a" />
      <path d="M14 14 1.900 7A14 14 0 0 1 26.100 7H14z" fill="#dd4b3e" />
      <path d="M1.900 7A14 14 0 0 0 14 28l6-10.500L14 14 8 17.500z" fill="#1ba261" />
      <circle cx="14" cy="14" r="6.5" fill="#fff" />
      <circle cx="14" cy="14" r="5.2" fill="#4c8bf5" />
    </svg>
  )
}

const taskbarApps: { name: string; icon: ReactNode; open?: boolean }[] = [
  { name: "Edge", icon: <FaEdgeLegacy className="size-[27px] text-[#0078d7]" /> },
  { name: "Explorer", icon: <ExplorerIcon />, open: true },
  { name: "Store", icon: <StoreIcon /> },
  { name: "Amazon", icon: <AmazonIcon /> },
  { name: "Dropbox", icon: <FaDropbox className="size-[30px] text-white" /> },
  { name: "Notizen", icon: <SBoltIcon /> },
  { name: "Mail", icon: <MailIcon /> },
  { name: "Chrome", icon: <ChromeIcon /> },
  {
    name: "Spotify",
    icon: (
      <span className="rounded-full bg-[#1a1a1a]">
        <FaSpotify className="size-[30px] text-[#1ed760]" />
      </span>
    ),
  },
]

function Tray() {
  return (
    <div className="ml-auto flex items-center text-white">
      <button aria-label="Support" className="flex size-7 items-center justify-center rounded-full border-3 border-white bg-[#0a9ade] text-[21px] leading-none font-bold">
        ?
      </button>
      <button aria-label="Kontakte" className="ml-[27px]">
        <svg viewBox="0 0 20 20" className="size-5" fill="none" stroke="currentColor" strokeWidth="1.5" aria-hidden="true">
          <circle cx="13.5" cy="4.5" r="3.6" />
          <circle cx="6" cy="10.5" r="3.3" />
          <path d="M10 10.500c2-3 7-3.500 9 1.500M1 19c.5-6.500 9-6.500 9.500 0" />
        </svg>
      </button>
      <button aria-label="Ausgeblendete Symbole einblenden" className="ml-[31px]">
        <svg viewBox="0 0 18 10" className="h-2.5 w-[18px]" fill="none" stroke="currentColor" strokeWidth="1.4" aria-hidden="true">
          <path d="M1 9.500 9 1.500l8 8" />
        </svg>
      </button>
      <button aria-label="Akku" className="ml-[22px]">
        <svg viewBox="0 0 19 12" className="h-3 w-[19px]" fill="none" aria-hidden="true">
          <path d="M.6.600h16.800v10.800H.6z" stroke="#fff" strokeWidth="1.2" />
          <path d="M2.500 2.500h8.500v7H2.500zM17.500 4H19v4h-1.500z" fill="#fff" />
        </svg>
      </button>
      <button aria-label="WLAN" className="ml-[23px]">
        <svg viewBox="0 0 16 16" className="size-4" fill="none" stroke="#fff" strokeWidth="1.3" aria-hidden="true">
          <path d="M.7 15.500A15 15 0 0 1 15.700.700" opacity=".7" />
          <path d="M4.500 15.500A11 11 0 0 1 15.700 4.800M8.300 15.500a7.500 7.500 0 0 1 7.400-6.700" />
          <circle cx="14" cy="14" r="1.6" fill="#fff" stroke="none" />
        </svg>
      </button>
      <button aria-label="Lautstärke" className="ml-[21px]">
        <svg viewBox="0 0 20 18" className="h-[18px] w-5" fill="none" stroke="#fff" strokeWidth="1.2" aria-hidden="true">
          <path d="M.6 6h3L8.400 2v14l-4.800-4h-3z" />
          <path d="M11 6.500c1 1.500 1 3.500 0 5M13.500 4.500c2 2.500 2 6.500 0 9" />
          <path d="M16.500 1.500c3 4.500 3 10.500 0 15" opacity=".5" />
        </svg>
      </button>
      <button aria-label="Windows Ink" className="ml-[25px]">
        <svg viewBox="0 0 20 20" className="size-5" fill="none" stroke="#fff" strokeWidth="1.3" aria-hidden="true">
          <path d="M5 19 13.500 1.500c1-1.500 3.500 0 2.800 1.500L8 17.500z" />
          <path d="M7 10.500c-4 .5-6 2.500-6 5 0 3 4 4 7 2 4-3 4-6 7-8.500 2.500-1.500 4 .5 4 2-1 1-3 0-4.500-1.500" />
        </svg>
      </button>
      <button className="ml-5 w-[76px] text-center text-[14px] leading-[23px]">
        17:01
        <br />
        06.01.2019
      </button>
      <button aria-label="Info-Center" className="relative ml-5">
        <svg viewBox="0 0 20 20" className="size-5" aria-hidden="true">
          <path d="M0 0h20v17H9l-4 3v-3H0z" fill="#fff" />
          <path d="M4 4.500h12M4 8.500h12M4 12.500h8" stroke="#1a2226" strokeWidth="1.2" />
        </svg>
        <span className="absolute -right-2.5 -bottom-2.5 flex size-5 items-center justify-center rounded-full border border-[#888] bg-[#2a2f33] text-[14px] leading-none font-semibold">
          4
        </span>
      </button>
      <span className="mr-[5px] ml-[25px] h-[50px] w-px bg-[#5c656b]" />
    </div>
  )
}

function Taskbar() {
  return (
    <div className="flex h-[50px] shrink-0 items-stretch bg-linear-to-r from-[#10222b] via-[#1b2225] via-50% to-[#07151d]">
      <button aria-label="Start" className="flex w-[60px] items-center justify-center">
        <svg viewBox="0 0 20 20" className="size-5" aria-hidden="true">
          <WinLogo />
        </svg>
      </button>
      <label className="flex w-[430px] items-center border-t border-[#aebabb] bg-[#f2f2f2] pr-[18px] pl-[11px]">
        <span className="size-7 rounded-full border-[4px] border-black" />
        <input
          aria-label="Suche"
          placeholder="Zur Suche Text hier eingeben"
          className="ml-[11px] min-w-0 flex-1 text-[17px] outline-none placeholder:text-[#3c3c3c]"
        />
        <svg viewBox="0 0 14 20" className="h-5 w-3.5" fill="none" stroke="#333" strokeWidth="1.6" aria-hidden="true">
          <rect x="3.5" y=".8" width="7" height="13.5" rx="1.5" />
          <path d="M.8 11v3.500c0 1.500 1 2.500 2.500 2.500h7.400c1.500 0 2.500-1 2.500-2.500V11M7 17v2.500M4 19.300h6" />
        </svg>
      </label>
      <button aria-label="Aktive Anwendungen" className="flex w-16 items-center justify-center pr-1">
        <svg viewBox="0 0 20 20" className="size-5" fill="none" stroke="#fff" strokeWidth="1.2" aria-hidden="true">
          <path d="M1 5.500h11v9H1zM.6 0v3h11.800V0M.6 20v-3h11.800v3M18 0v4M18 11v9" />
          <path d="M16.500 6h3v3h-3z" fill="#fff" stroke="none" />
        </svg>
      </button>
      {taskbarApps.map((app) => (
        <button
          key={app.name}
          aria-label={app.name}
          className={`flex w-[62px] items-center justify-center ${app.open ? "border-r-4 border-b-3 border-r-[#3c4448] border-b-[#76b9ed] bg-[#4b5356] pt-0.5 pl-1" : ""}`}
        >
          {app.icon}
        </button>
      ))}
      <Tray />
    </div>
  )
}

export default function App() {
  return (
    <div className="relative flex h-screen flex-col overflow-hidden bg-white font-['Open_Sans','Noto_Sans',sans-serif] text-[14px] text-black">
      <TitleBar />
      <Ribbon />
      <AddressBar />
      <div className="flex min-h-0 flex-1">
        <Sidebar />
        <FileArea />
      </div>
      <StatusBar />
      <Taskbar />
      <MapDriveDialog />
      <CredentialDialog />
    </div>
  )
}
